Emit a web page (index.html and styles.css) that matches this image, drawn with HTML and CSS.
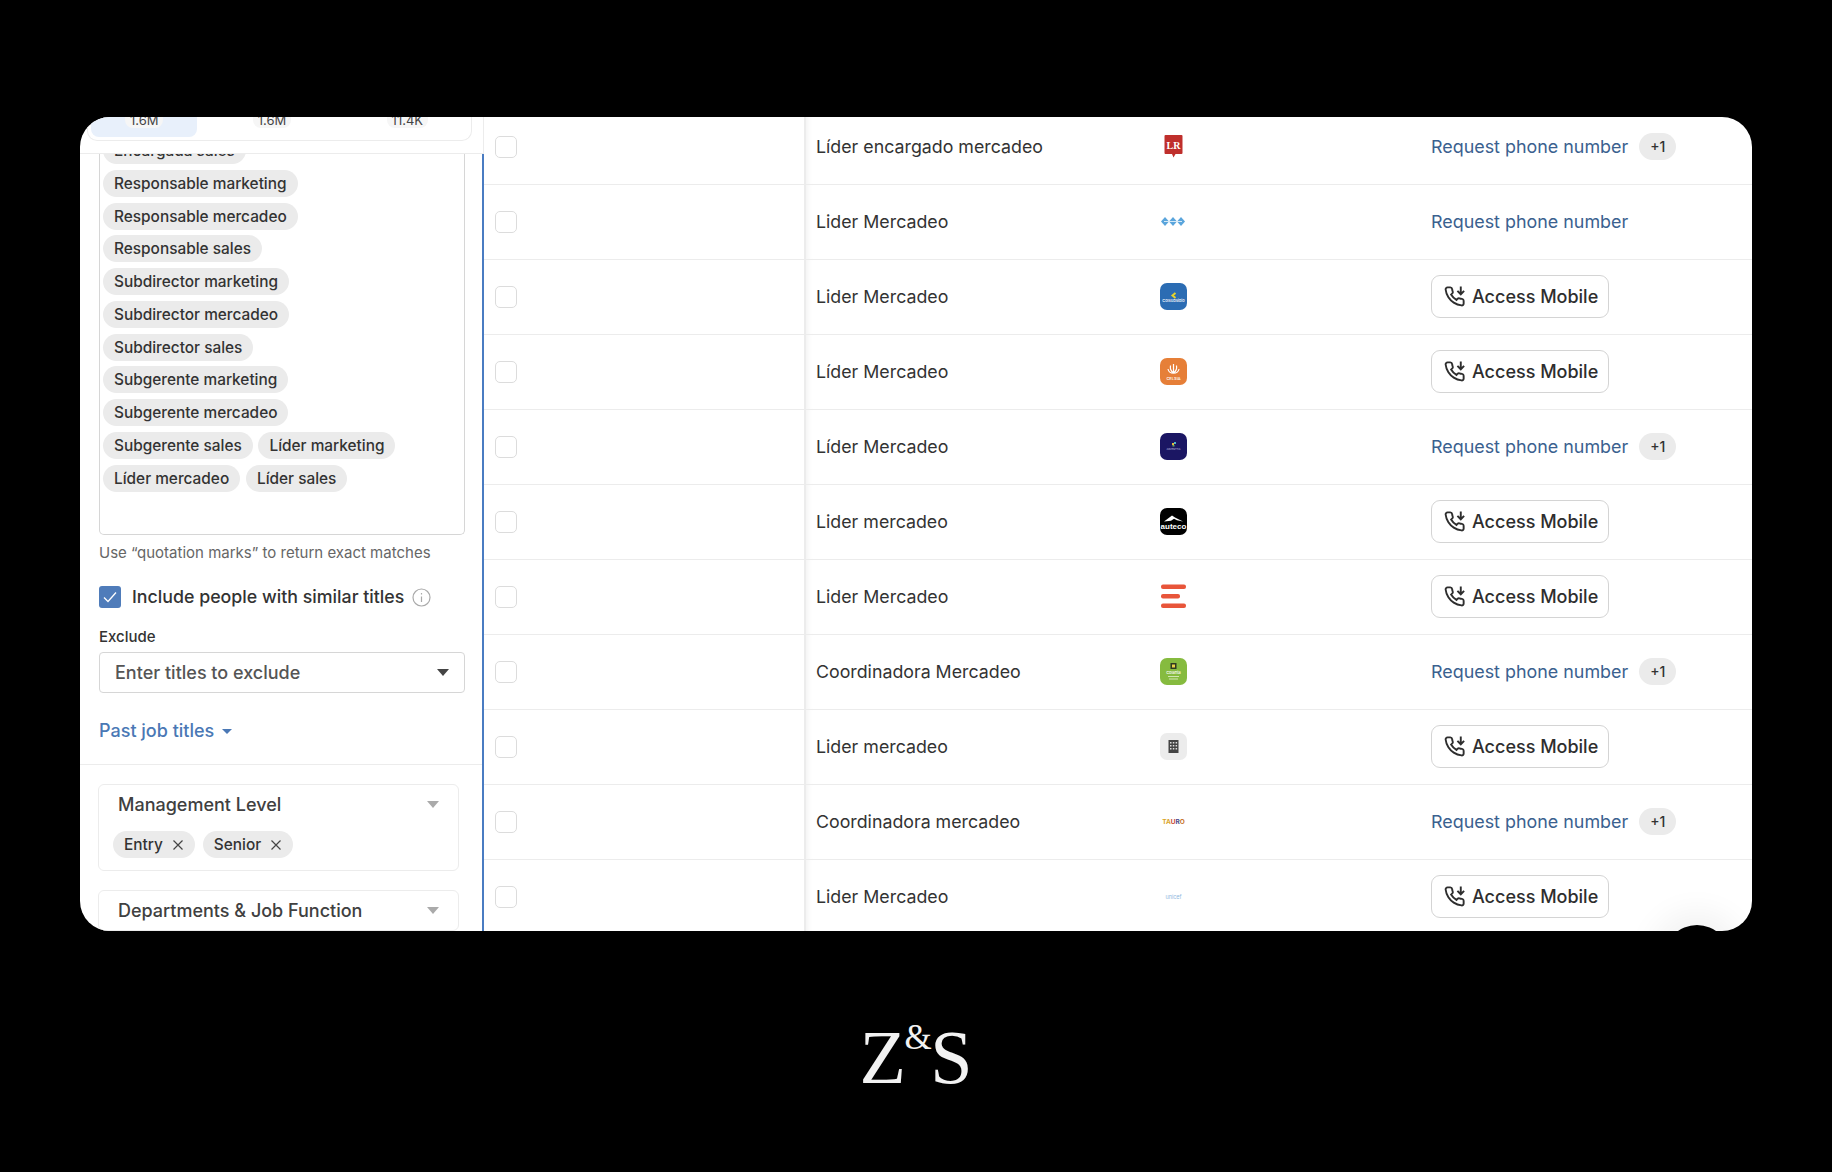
FILE: index.html
```html
<!DOCTYPE html>
<html lang="en">
<head>
  <meta charset="UTF-8" />
  <title>Z&amp;S – Contact search</title>
  <link rel="stylesheet" href="styles.css">
</head>
<body>
  <svg class="defs" width="0" height="0" aria-hidden="true">
    <symbol id="phone" viewBox="0 0 24 24">
      <path d="M20.5 16.4v2.9a2 2 0 0 1-2.2 2 18.6 18.6 0 0 1-8.1-2.9 18.3 18.3 0 0 1-5.6-5.6 18.6 18.6 0 0 1-2.9-8.1A2 2 0 0 1 3.7 2.5h2.9a2 2 0 0 1 1.9 1.7c.1.9.3 1.8.6 2.6a2 2 0 0 1-.4 2L7.4 10a15 15 0 0 0 5.6 5.6l1.2-1.3a2 2 0 0 1 2-.4c.8.3 1.7.5 2.6.6a2 2 0 0 1 1.7 2z" fill="none" stroke="currentColor" stroke-width="2"/>
      <path d="M17.5 1.5v8M14 6.2l3.5 3.5L21 6.2" fill="none" stroke="currentColor" stroke-width="2"/>
    </symbol>
    <symbol id="close" viewBox="0 0 12 12">
      <path d="M1.5 1.5l9 9M10.5 1.5l-9 9" fill="none" stroke="currentColor" stroke-width="1.2"/>
    </symbol>
  </svg>

  <main class="card">
    <aside class="sidebar">
      <div class="strip">
        <div class="tabs">
          <div class="tab tab-active"><span class="count">1.6M</span></div>
          <div class="tab tab-mid"><span class="count">1.6M</span></div>
          <div class="tab tab-last"><span class="count">11.4K</span></div>
        </div>
      </div>

      <div class="filters">
        <section class="titles">
          <div class="tag-box">
            <div class="tag-list">
              <span class="chip">Encargada sales</span>
              <span class="chip">Responsable marketing</span>
              <span class="chip">Responsable mercadeo</span>
              <span class="chip">Responsable sales</span>
              <span class="chip">Subdirector marketing</span>
              <span class="chip">Subdirector mercadeo</span>
              <span class="chip">Subdirector sales</span>
              <span class="chip">Subgerente marketing</span>
              <span class="chip">Subgerente mercadeo</span>
              <span class="chip">Subgerente sales</span>
              <span class="chip">Líder marketing</span>
              <span class="chip">Líder mercadeo</span>
              <span class="chip">Líder sales</span>
            </div>
          </div>
          <p class="hint">Use “quotation marks” to return exact matches</p>
          <label class="similar">
            <span class="tick">
              <svg width="14" height="12" viewBox="0 0 14 12"><path d="M1 6.5l4 4 8-9" fill="none" stroke="#fff" stroke-width="1.3"/></svg>
            </span>
            Include people with similar titles
            <svg class="info" width="19" height="19" viewBox="0 0 19 19"><circle cx="9.5" cy="9.5" r="8.5" fill="none" stroke="#aaa" stroke-width="1.2"/><path d="M9.5 8.5v5.5M9.5 5v1.4" stroke="#aaa" stroke-width="1.2"/></svg>
          </label>
          <div class="field-label">Exclude</div>
          <div class="select">Enter titles to exclude <i class="caret caret-dark"></i></div>
          <a class="past" href="#">Past job titles <i class="caret caret-blue"></i></a>
        </section>

        <section class="groups">
          <div class="group">
            <div class="group-head">Management Level <i class="caret caret-grey"></i></div>
            <div class="group-tags">
              <span class="chip">Entry <svg class="x" width="12" height="12"><use href="#close"/></svg></span>
              <span class="chip">Senior <svg class="x" width="12" height="12"><use href="#close"/></svg></span>
            </div>
          </div>
          <div class="group">
            <div class="group-head">Departments &amp; Job Function <i class="caret caret-grey"></i></div>
          </div>
        </section>
      </div>
    </aside>

    <section class="results">
      <div class="row">
        <span class="box"></span>
        <div class="job">Líder encargado mercadeo</div>
        <div class="logo">
          <svg width="27" height="27" viewBox="0 0 27 27"><path d="M5.500 2h16a1 1 0 0 1 1 1v17a1 1 0 0 1-1 1h-6l-2 3.500-1.500-3.500h-6.500a1 1 0 0 1-1-1v-17a1 1 0 0 1 1-1z" fill="#bf2f2c"/><text x="13.500" y="16" class="lg-lr">LR</text></svg>
        </div>
        <div class="action"><a class="req" href="#">Request phone number</a><span class="more">+1</span></div>
      </div>

      <div class="row">
        <span class="box"></span>
        <div class="job">Lider Mercadeo</div>
        <div class="logo">
          <svg width="27" height="27" viewBox="0 0 27 27"><g fill="#5aa5dc"><path d="M5 9l4 4.500-4 4.500-4-4.500z"/><path d="M13 9l4 4.500-4 4.500-4-4.500z"/><path d="M21 9l4 4.500-4 4.500-4-4.500z"/></g><path d="M4 13.500h18" stroke="#d5e9f7" stroke-width="1"/></svg>
        </div>
        <div class="action"><a class="req" href="#">Request phone number</a></div>
      </div>

      <div class="row">
        <span class="box"></span>
        <div class="job">Lider Mercadeo</div>
        <div class="logo">
          <svg width="27" height="27" viewBox="0 0 27 27"><rect width="27" height="27" rx="7" fill="#2b6cb3"/><path d="M15.500 10l-3 2.500 3 2.500" fill="none" stroke="#e6d32c" stroke-width="2"/><text x="13.500" y="19" class="lg-tiny">Colsubsidio</text></svg>
        </div>
        <div class="action"><button class="mobile"><svg class="ph" width="23" height="23"><use href="#phone"/></svg>Access Mobile</button></div>
      </div>

      <div class="row">
        <span class="box"></span>
        <div class="job">Líder Mercadeo</div>
        <div class="logo">
          <svg width="27" height="27" viewBox="0 0 27 27"><rect width="27" height="27" rx="7" fill="#e67f38"/><path d="M13.500 6v9M10.500 7.500c-.5 3 .8 6 3 7.500 2.200-1.500 3.500-4.500 3-7.500M8 11c.5 2.500 2.500 4.200 5.500 4.200s5-1.700 5.500-4.200" fill="none" stroke="#fff" stroke-width="1.200"/><text x="13.500" y="22" class="lg-tiny">CELSIA</text></svg>
        </div>
        <div class="action"><button class="mobile"><svg class="ph" width="23" height="23"><use href="#phone"/></svg>Access Mobile</button></div>
      </div>

      <div class="row">
        <span class="box"></span>
        <div class="job">Líder Mercadeo</div>
        <div class="logo">
          <svg width="27" height="27" viewBox="0 0 27 27"><rect width="27" height="27" rx="7" fill="#1b1663"/><rect x="12" y="10" width="2" height="2" fill="#e8b93a"/><rect x="14" y="9" width="2" height="2" fill="#4fb6c9"/><rect x="12.500" y="12" width="2" height="1.500" fill="#6fae5a"/><text x="13.500" y="16.500" class="lg-micro">ADVENTTIA</text></svg>
        </div>
        <div class="action"><a class="req" href="#">Request phone number</a><span class="more">+1</span></div>
      </div>

      <div class="row">
        <span class="box"></span>
        <div class="job">Lider mercadeo</div>
        <div class="logo">
          <svg width="27" height="27" viewBox="0 0 27 27"><rect width="27" height="27" rx="7" fill="#000"/><path d="M4 13.500l8-6 3 2 8 4-6-1.200-3-1.500-3 2z" fill="#fff"/><text x="13.500" y="20.500" class="lg-auteco">auteco</text></svg>
        </div>
        <div class="action"><button class="mobile"><svg class="ph" width="23" height="23"><use href="#phone"/></svg>Access Mobile</button></div>
      </div>

      <div class="row">
        <span class="box"></span>
        <div class="job">Lider Mercadeo</div>
        <div class="logo">
          <svg width="27" height="27" viewBox="0 0 27 27"><g fill="#e8553a"><rect x="1" y="1.500" width="25" height="4.500" rx="2"/><rect x="1" y="11" width="19" height="4.500" rx="2"/><rect x="1" y="20.500" width="25" height="4.500" rx="2"/></g></svg>
        </div>
        <div class="action"><button class="mobile"><svg class="ph" width="23" height="23"><use href="#phone"/></svg>Access Mobile</button></div>
      </div>

      <div class="row">
        <span class="box"></span>
        <div class="job">Coordinadora Mercadeo</div>
        <div class="logo">
          <svg width="27" height="27" viewBox="0 0 27 27"><rect width="27" height="27" rx="7" fill="#86bb3f"/><rect x="10.500" y="5" width="6" height="6" fill="#2f3a22"/><rect x="12" y="6.500" width="3" height="3" fill="#e8d24a"/><text x="13.500" y="15.500" class="lg-tiny">Colanta</text><path d="M8 18.500h11M9 21h9" stroke="#e4f1d0" stroke-width=".8"/></svg>
        </div>
        <div class="action"><a class="req" href="#">Request phone number</a><span class="more">+1</span></div>
      </div>

      <div class="row">
        <span class="box"></span>
        <div class="job">Lider mercadeo</div>
        <div class="logo">
          <svg width="27" height="27" viewBox="0 0 27 27"><rect width="27" height="27" rx="7" fill="#ececec"/><rect x="8.500" y="7" width="10" height="13" fill="#444"/><g fill="#ddd"><rect x="10" y="9" width="1.500" height="1.500"/><rect x="12.800" y="9" width="1.500" height="1.500"/><rect x="15.600" y="9" width="1.500" height="1.500"/><rect x="10" y="12" width="1.500" height="1.500"/><rect x="12.800" y="12" width="1.500" height="1.500"/><rect x="15.600" y="12" width="1.500" height="1.500"/><rect x="10" y="15" width="1.500" height="1.500"/><rect x="12.800" y="15" width="1.500" height="1.500"/><rect x="15.600" y="15" width="1.500" height="1.500"/></g></svg>
        </div>
        <div class="action"><button class="mobile"><svg class="ph" width="23" height="23"><use href="#phone"/></svg>Access Mobile</button></div>
      </div>

      <div class="row">
        <span class="box"></span>
        <div class="job">Coordinadora mercadeo</div>
        <div class="logo">
          <svg width="27" height="27" viewBox="0 0 27 27"><text x="13.500" y="15.500" class="lg-tauro"><tspan fill="#d9a52b">TA</tspan><tspan fill="#c8452f">U</tspan><tspan fill="#4a4a8c">R</tspan><tspan fill="#c8762f">O</tspan></text></svg>
        </div>
        <div class="action"><a class="req" href="#">Request phone number</a><span class="more">+1</span></div>
      </div>

      <div class="row">
        <span class="box"></span>
        <div class="job">Lider Mercadeo</div>
        <div class="logo">
          <svg width="27" height="27" viewBox="0 0 27 27"><text x="13.500" y="15.500" class="lg-unicef">unicef</text></svg>
        </div>
        <div class="action"><button class="mobile"><svg class="ph" width="23" height="23"><use href="#phone"/></svg>Access Mobile</button></div>
      </div>
    </section>

    <div class="chat"></div>
  </main>

  <footer class="brand">
    <span class="brand-letter">Z</span><span class="brand-amp">&amp;</span><span class="brand-letter">S</span>
  </footer>
</body>
</html>
```

FILE: styles.css
```css
:root {
  --ink: #333;
  --line: #ececec;
  --chip: #ebebeb;
  --blue: #4a78b5;
  --link: #3b618f;
}
* { box-sizing: border-box; }
body {
  margin: 0;
  height: 1172px;
  overflow: hidden;
  padding-top: 117px;
  background: #000;
  color: var(--ink);
  font-family: Inter, "Liberation Sans", sans-serif;
}
.defs { position: absolute; }

.card {
  position: relative;
  display: flex;
  width: 1672px;
  height: 814px;
  margin-left: 80px;
  background: #fff;
  border-radius: 30px;
  overflow: hidden;
}

/* sidebar */
.sidebar {
  flex: none;
  width: 404px;
  overflow: hidden;
}
.strip {
  height: 37px;
  padding: 0 11px 0 7px;
  border-right: 1px solid var(--line);
  border-bottom: 1px solid var(--line);
}
.tabs {
  display: flex;
  height: 24px;
  padding: 0 3px;
  border: 1px solid var(--line);
  border-top: none;
  border-radius: 0 0 10px 10px;
}
.tab {
  display: flex;
  justify-content: center;
  width: 107px;
  height: 20px;
  border-radius: 0 0 8px 8px;
}
.tab-active { background: #e8f0fb; }
.tab-mid { width: 150px; }
.tab-last { width: 122px; }
.count {
  height: 11px;
  padding: 0 5px;
  line-height: 6px;
  font-size: 13px;
  color: #444;
  background: #f6f6f6;
  border-radius: 0 0 8px 8px;
}

.filters {
  height: 777px;
  border-right: 2px solid #4a7cc2;
}
.titles {
  height: 611px;
  padding: 0 17px 0 19px;
  border-bottom: 1px solid var(--line);
}
.tag-box {
  height: 381px;
  border: 1px solid #d6d6d6;
  border-top: none;
  border-radius: 0 0 5px 5px;
  overflow: hidden;
}
.tag-list {
  display: flex;
  flex-wrap: wrap;
  align-items: flex-start;
  gap: 5.750px;
  width: 320px;
  margin-top: -17px;
  padding-left: 3px;
}
.chip {
  display: inline-flex;
  align-items: center;
  height: 27px;
  padding: 0 11px;
  font-size: 15.400px;
  font-weight: 500;
  white-space: nowrap;
  background: var(--chip);
  border-radius: 14px;
}
.hint {
  margin: 9px 0 0;
  font-size: 15px;
  line-height: 18px;
  color: #666;
}
.similar {
  display: flex;
  align-items: center;
  margin-top: 24px;
  font-size: 17.800px;
  font-weight: 500;
  line-height: 22px;
}
.tick {
  display: flex;
  align-items: center;
  justify-content: center;
  width: 22px;
  height: 22px;
  margin-right: 11px;
  background: #4f7cba;
  border-radius: 3px;
}
.info { margin-left: 8px; }
.field-label {
  margin-top: 20px;
  font-size: 15px;
  line-height: 18px;
  font-weight: 500;
}
.select {
  display: flex;
  align-items: center;
  justify-content: space-between;
  height: 41px;
  margin-top: 6px;
  padding: 0 15px;
  font-size: 18px;
  font-weight: 500;
  color: #555;
  border: 1px solid #d6d6d6;
  border-radius: 4px;
}
.past {
  display: flex;
  align-items: center;
  gap: 8px;
  margin-top: 27px;
  font-size: 18px;
  line-height: 22px;
  font-weight: 500;
  color: var(--blue);
  text-decoration: none;
}
.caret {
  display: inline-block;
  width: 0;
  height: 0;
  border-left: 6px solid transparent;
  border-right: 6px solid transparent;
}
.caret-dark { border-top: 7px solid #444; }
.caret-blue { border-left-width: 5px; border-right-width: 5px; border-top: 5px solid var(--blue); }
.caret-grey { border-top: 7px solid #aaa; }

.groups {
  display: flex;
  flex-direction: column;
  gap: 19px;
  padding: 19px 23px 0 18px;
}
.group {
  border: 1px solid var(--line);
  border-radius: 6px;
}
.group-head {
  display: flex;
  align-items: center;
  justify-content: space-between;
  height: 39px;
  padding: 0 19px;
  font-size: 18px;
  font-weight: 500;
  color: #404040;
}
.group-tags {
  display: flex;
  gap: 8px;
  padding: 7px 14px 12px;
}
.group-tags .chip { gap: 9px; }
.x { color: #444; }

/* result rows */
.results {
  flex: 1;
  margin-top: -7.500px;
}
.row {
  display: grid;
  grid-template-columns: 320px 356px 271px 1fr;
  align-items: center;
  height: 75.050px;
  border-bottom: 1px solid var(--line);
}
.box {
  justify-self: start;
  width: 22px;
  height: 22px;
  margin-left: 11px;
  border: 1.500px solid #dcdcdc;
  border-radius: 5px;
}
.job {
  display: flex;
  align-items: center;
  height: 100%;
  padding-left: 10px;
  font-size: 17.800px;
  color: #333;
  border-left: 2px solid #ececec;
  box-shadow: inset 6px 0 6px -5px #efefef;
}
.logo { display: flex; }
.logo svg { display: block; }
.action {
  display: flex;
  align-items: center;
  gap: 11px;
}
.req {
  font-size: 17.900px;
  color: var(--link);
  text-decoration: none;
}
.more {
  display: flex;
  align-items: center;
  justify-content: center;
  width: 37px;
  height: 27px;
  font-size: 14px;
  font-weight: 500;
  background: var(--chip);
  border-radius: 14px;
}
.mobile {
  display: flex;
  align-items: center;
  gap: 5px;
  width: 178px;
  height: 43px;
  padding: 0 0 0 12px;
  font-family: inherit;
  font-size: 18px;
  font-weight: 500;
  color: #2e2e2e;
  background: #fff;
  border: 1px solid #d4d4d4;
  border-radius: 9px;
}

/* text inside the little company logos */
.logo text { text-anchor: middle; }
.lg-lr { font: bold 10px "Liberation Serif", serif; fill: #fff; }
.lg-tiny { font: 500 4px Inter, sans-serif; fill: #fff; }
.lg-micro { font: 2.500px Inter, sans-serif; fill: #c9c9e6; }
.lg-auteco { font: bold 8px "Liberation Sans", sans-serif; fill: #fff; }
.lg-tauro { font: bold 6.500px Inter, sans-serif; }
.lg-unicef { font: 5.500px Inter, sans-serif; fill: #8fb8e0; }

.chat {
  position: absolute;
  left: 1584px;
  top: 808px;
  width: 66px;
  height: 66px;
  background: #000;
  border-radius: 50%;
  box-shadow: 0 0 30px 14px rgba(0, 0, 0, 0.05);
}

/* footer logo */
.brand {
  display: flex;
  justify-content: center;
  align-items: flex-start;
  margin-top: 88px;
  color: #f2f2f2;
  font-family: "Liberation Serif", serif;
}
.brand-letter {
  font-size: 76px;
  line-height: 76px;
}
.brand-amp {
  margin: 0 -1.500px;
  font-size: 35px;
  line-height: 38px;
}
```
